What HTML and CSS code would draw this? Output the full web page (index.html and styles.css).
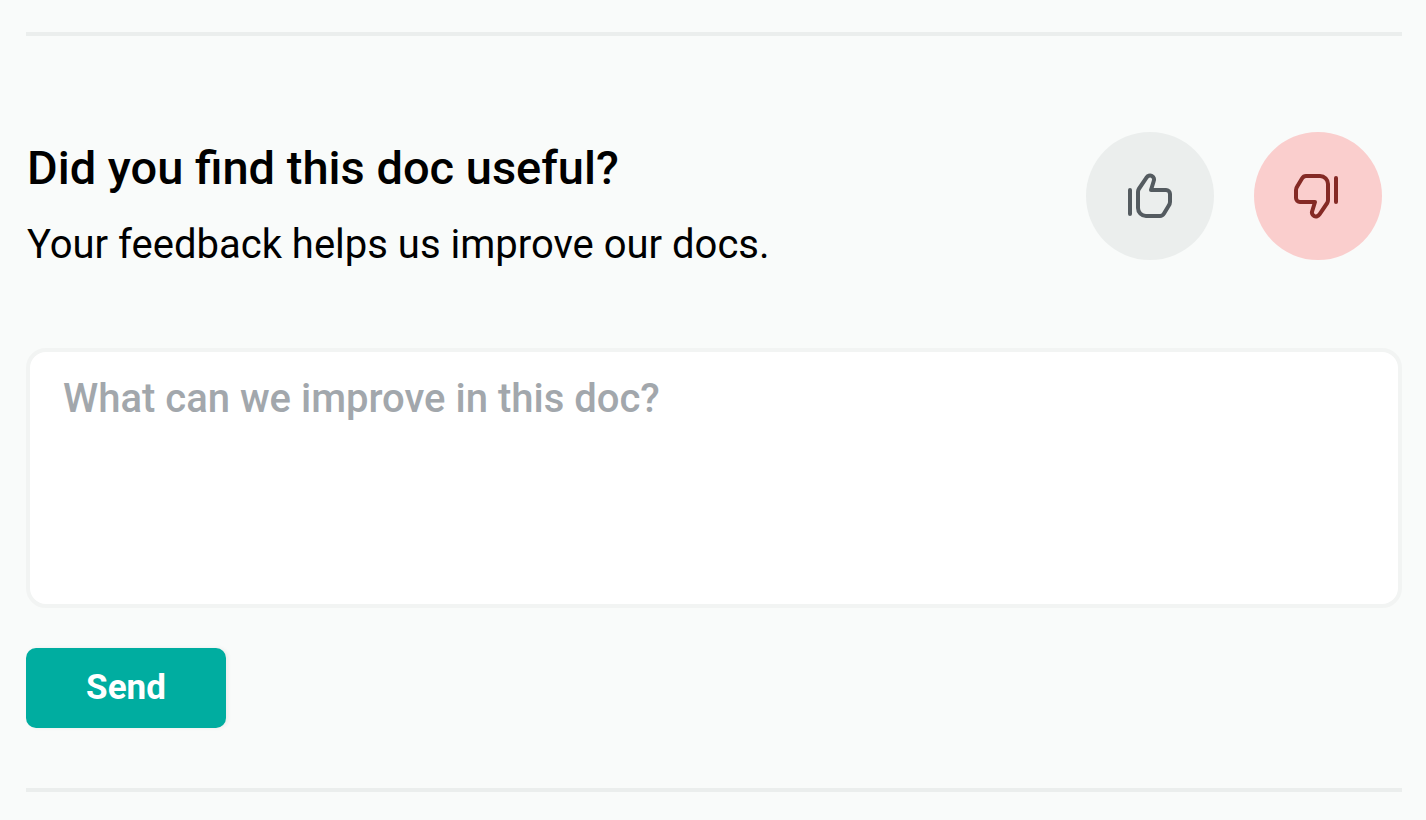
FILE: index.html
```html
<!DOCTYPE html>
<html lang="en">
<head>
<meta charset="utf-8">
<meta name="viewport" content="width=device-width, initial-scale=1">
<title>Doc feedback</title>
<link rel="stylesheet" href="styles.css">
</head>
<body>
<form class="feedback">
  <header class="feedback-header">
    <div class="feedback-copy">
      <h2 class="feedback-title">Did you find this doc useful?</h2>
      <p class="feedback-text">Your feedback helps us improve our docs.</p>
    </div>
    <div class="votes">
      <button class="vote" type="button" aria-label="Yes, useful">
        <svg class="icon" viewBox="0 0 48 48" aria-hidden="true"><path d="M4 18V42M12 20V36A8 8 0 0 0 20 44H34Q36.500 44 38 41.500L42.500 34Q44 32 44 30V22A4 4 0 0 0 40 18H25L27.600 9.500A4 4 0 0 0 20.500 5.700L12.800 17Q12 18.200 12 20Z"/></svg>
      </button>
      <button class="vote vote-selected" type="button" aria-label="No, not useful" aria-pressed="true">
        <svg class="icon" viewBox="0 0 48 48" aria-hidden="true"><path transform="rotate(180 23 24)" d="M4 18V42M12 20V36A8 8 0 0 0 20 44H34Q36.500 44 38 41.500L42.500 34Q44 32 44 30V22A4 4 0 0 0 40 18H25L27.600 9.500A4 4 0 0 0 20.500 5.700L12.800 17Q12 18.200 12 20Z"/></svg>
      </button>
    </div>
  </header>
  <textarea class="comment" aria-label="What can we improve in this doc?" placeholder="What can we improve in this doc?"></textarea>
  <button class="send" type="submit">Send</button>
</form>
</body>
</html>
```

FILE: styles.css
```css
* { box-sizing: border-box; }
body {
  margin: 0;
  background: #f9fbfa;
  color: #000;
  font-family: Roboto, sans-serif;
}
.feedback {
  margin: 32px 24px 0 26px;
  padding: 96px 0 60px;
  border-top: 4px solid #ebeeed;
  border-bottom: 4px solid #ebeeed;
}
.feedback-header {
  display: flex;
  justify-content: space-between;
  align-items: flex-start;
  padding-right: 20px;
  margin-bottom: 74px;
}
.feedback-copy { padding: 8px 0 0 1px; }
.feedback-title {
  margin: 0;
  font-size: 47px;
  line-height: 56px;
  font-weight: 500;
}
.feedback-text {
  margin: 20px 0 0;
  font-size: 40px;
  line-height: 58px;
}
.votes { display: flex; gap: 40px; }
.vote {
  display: flex;
  align-items: center;
  justify-content: center;
  width: 128px;
  height: 128px;
  padding: 0;
  border: 0;
  border-radius: 50%;
  background: #ebeeed;
  color: #545b60;
}
.vote-selected { background: #facecd; color: #842a25; }
.icon {
  width: 48px;
  height: 48px;
  fill: none;
  stroke: currentColor;
  stroke-width: 4;
  stroke-linecap: round;
  stroke-linejoin: round;
}
.comment {
  display: block;
  width: 100%;
  height: 260px;
  padding: 20px 33px;
  border: 4px solid #f2f4f3;
  border-radius: 20px;
  background: #fff;
  color: #000;
  font: 500 40px/54px Roboto, sans-serif;
  resize: none;
}
.comment::placeholder { color: #a2a7ac; opacity: 1; }
.send {
  display: block;
  width: 200px;
  height: 80px;
  margin-top: 40px;
  padding: 0;
  border: 0;
  border-radius: 10px;
  background: #00ada0;
  color: #fff;
  font: 700 35px/40px Roboto, sans-serif;
  box-shadow: 2px 0 4px rgba(0, 0, 0, 0.06);
}
```
